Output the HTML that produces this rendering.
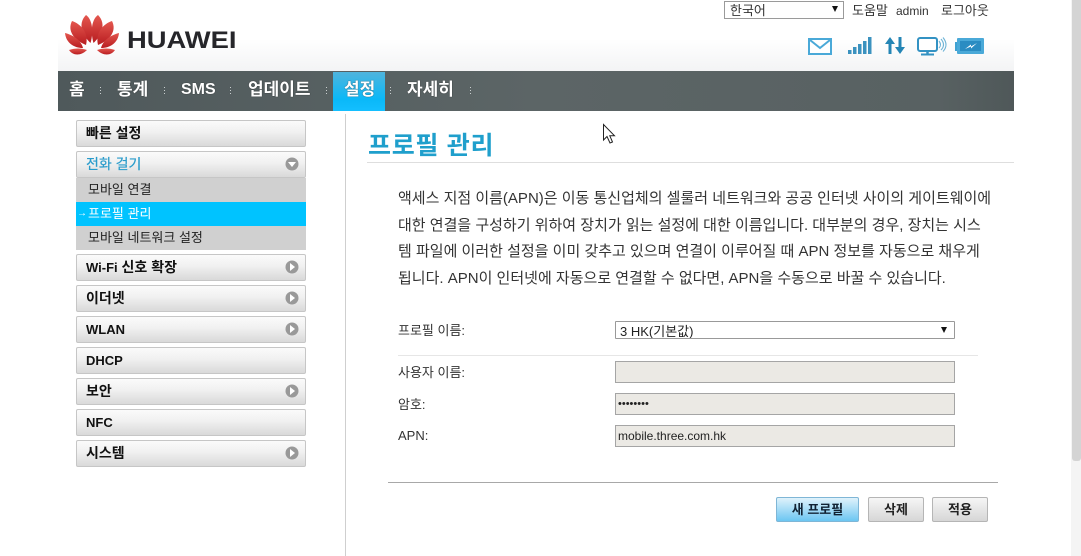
<!DOCTYPE html>
<html lang="ko"><head><meta charset="utf-8"><title>프로필 관리</title>
<style>
html,body{margin:0;padding:0;width:1081px;height:556px;overflow:hidden;background:#fff}
body{font-family:"Liberation Sans","Noto Sans CJK KR",sans-serif;font-size:12px;color:#222;position:relative}
.a{position:absolute;white-space:nowrap}
#hd{left:58px;top:0;width:956px;height:71px;background:linear-gradient(#fff 55%,#f3f4f5)}
#nav{left:58px;top:71px;width:956px;height:40px;background:linear-gradient(90deg,#4f595b,#5c6566 50%,#586162 92%,#4f5859)}
.n{top:80px;font-size:17px;line-height:20px;color:#fff;font-weight:bold;text-shadow:0 0 1px #222}
.d{top:87px;width:1px;height:9px;background:repeating-linear-gradient(#c9cfcf 0 1px,transparent 1px 3px)}
#act{left:333px;top:72px;width:52px;height:39px;background:linear-gradient(#4fb4dc,#0ab8f8 70%,#14bfff)}
.m{left:76px;width:228px;height:25px;border:1px solid #c6c6c6;border-radius:2px;background:linear-gradient(#fbfbfb,#f0f0f0 45%,#d9d9d9);font-size:14px;font-weight:bold;line-height:25px;text-indent:9px;color:#111}
.m i{font-style:normal;font-size:13px}
.s{left:76px;width:230px;height:24px;background:#d0d0d0;font-size:13px;line-height:24px;text-indent:12px;color:#222}
.ic{left:285px;width:14px;height:14px}
.lb{left:398px;font-size:13px;line-height:16px;color:#333}
.in{left:615px;width:338px;height:20px;border:1px solid #a5a5a5;background:#ebe9e4;font-size:12px;line-height:20px;color:#222}
.b{top:497px;height:23px;border:1px solid #b5b5b5;border-radius:2px;background:linear-gradient(#f6f6f6,#d6d6d6);text-align:center;font-size:13px;font-weight:bold;line-height:23px;color:#222}
p{margin:0}
</style></head><body>
<div class="a" id="hd"></div>

<svg class="a" style="left:62px;top:12px" width="62" height="46" viewBox="0 0 62 46">
<defs><linearGradient id="g" x1="0" y1="0" x2="0" y2="1"><stop offset="0" stop-color="#e4574f"/><stop offset="1" stop-color="#b81c20"/></linearGradient></defs>
<g fill="url(#g)">
<path d="M28.500 31C21 24 15 12 24 3C30 7 32 19 28.500 31Z"/>
<path d="M31.500 31C39 24 45 12 36 3C30 7 28 19 31.500 31Z"/>
<path d="M24 33C12 28 5 19 10 9C19 12 27 21 24 33Z"/>
<path d="M36 33C48 28 55 19 50 9C41 12 33 21 36 33Z"/>
<path d="M21 36C12 36 4 31 3 21C11 23 19 28 21 36Z"/>
<path d="M39 36C48 36 56 31 57 21C49 23 41 28 39 36Z"/>
<path d="M25 38C19 44 11 44 7 38C13 36 19 36 25 38Z"/>
<path d="M35 38C41 44 49 44 53 38C47 36 41 36 35 38Z"/>
</g></svg>
<div class="a" style="left:127px;top:26px;font-size:24px;line-height:30px;font-weight:bold;color:#26262a;transform:scaleX(1.14);transform-origin:0 0">HUAWEI</div>

<div class="a" style="left:724px;top:1px;width:118px;height:16px;border:1px solid #9a9a9a;font-size:13px;line-height:17px;text-indent:5px;color:#333">한국어</div>
<div class="a" style="left:832px;top:6px;width:0;height:0;border:3.500px solid transparent;border-top:6px solid #111;border-bottom:0"></div>
<div class="a" style="left:852px;top:3px;font-size:13px;line-height:16px;color:#333">도움말</div>
<div class="a" style="left:896px;top:3px;font-size:12px;line-height:16px;color:#333">admin</div>
<div class="a" style="left:941px;top:3px;font-size:13px;line-height:16px;color:#333">로그아웃</div>

<svg class="a" style="left:805px;top:35px" width="185" height="22" viewBox="0 0 185 22">
<rect x="4" y="4" width="22" height="15" fill="#fff" stroke="#4aa9d8" stroke-width="2"/>
<path d="M5 5L15 13L25 5" fill="none" stroke="#4aa9d8" stroke-width="2"/>
<g fill="#3b92bf"><rect x="43" y="15" width="3.500" height="4"/><rect x="48" y="12" width="3.500" height="7"/><rect x="53" y="9" width="3.500" height="10"/><rect x="58" y="6" width="3.500" height="13"/><rect x="63" y="2" width="3.500" height="17"/></g>
<path d="M85 2L90 9H86.500V19H83.500V9H80Z" fill="#2485b5"/>
<path d="M95 19L100 12H96.500V2H93.500V12H90Z" fill="#2485b5"/>
<rect x="113" y="3" width="19" height="13" rx="2" fill="#fff" stroke="#3392c3" stroke-width="2"/>
<path d="M122.500 16V19" stroke="#3392c3" stroke-width="2.500"/><path d="M116 19.500H129" stroke="#3392c3" stroke-width="2"/>
<path d="M134 6Q137 10 134 13M136 4Q141 10 136 15M138 2.500Q144 10 138 16.500" fill="none" stroke="#6fb4d6" stroke-width="1.100"/>
<rect x="150" y="7" width="3" height="9" fill="#3ea1d2"/>
<rect x="152" y="3" width="27" height="16" rx="1" fill="#4aa9d8"/>
<rect x="155" y="6" width="21" height="10" fill="#2a8cc2"/>
<path d="M160 14L166 9.500V11.500L172 8L166 13.500V11.500Z" fill="#fff"/>
</svg>

<div class="a" id="nav"></div>
<div class="a" id="act"></div>
<div class="a n" style="left:69px">홈</div><div class="a d" style="left:100px"></div>
<div class="a n" style="left:117px">통계</div><div class="a d" style="left:164px"></div>
<div class="a n" style="left:181px;font-size:16px">SMS</div><div class="a d" style="left:230px"></div>
<div class="a n" style="left:248px">업데이트</div><div class="a d" style="left:326px"></div>
<div class="a n" style="left:344px">설정</div><div class="a d" style="left:390px"></div>
<div class="a n" style="left:407px">자세히</div><div class="a d" style="left:470px"></div>

<div class="a m" style="top:120px">빠른 설정</div>
<div class="a m" style="top:151px;color:#2a9ccb;font-weight:normal;-webkit-text-stroke:.2px #2a9ccb">전화 걸기</div>
<svg class="a ic" style="top:157px" viewBox="0 0 14 14"><circle cx="7" cy="7" r="6.500" fill="#999"/><path d="M3 5H11L7 10Z" fill="#fff"/></svg>
<div class="a s" style="top:178px">모바일 연결</div>
<div class="a s" style="top:202px;background:#00c3ff;color:#fff;text-indent:0"><span style="position:absolute;left:1px;top:0;font-size:10px;text-indent:0">→</span><span style="position:absolute;left:12px;top:0;text-indent:0">프로필 관리</span></div>
<div class="a s" style="top:226px">모바일 네트워크 설정</div>
<div class="a m" style="top:254px"><i>Wi-Fi</i> 신호 확장</div>
<div class="a m" style="top:285px">이더넷</div>
<div class="a m" style="top:316px"><i>WLAN</i></div>
<div class="a m" style="top:347px"><i>DHCP</i></div>
<div class="a m" style="top:378px">보안</div>
<div class="a m" style="top:409px"><i>NFC</i></div>
<div class="a m" style="top:440px">시스템</div>
<svg class="a ic" style="top:260px" viewBox="0 0 14 14"><circle cx="7" cy="7" r="6.500" fill="#999"/><path d="M5 3V11L10 7Z" fill="#fff"/></svg>
<svg class="a ic" style="top:291px" viewBox="0 0 14 14"><circle cx="7" cy="7" r="6.500" fill="#999"/><path d="M5 3V11L10 7Z" fill="#fff"/></svg>
<svg class="a ic" style="top:322px" viewBox="0 0 14 14"><circle cx="7" cy="7" r="6.500" fill="#999"/><path d="M5 3V11L10 7Z" fill="#fff"/></svg>
<svg class="a ic" style="top:384px" viewBox="0 0 14 14"><circle cx="7" cy="7" r="6.500" fill="#999"/><path d="M5 3V11L10 7Z" fill="#fff"/></svg>
<svg class="a ic" style="top:446px" viewBox="0 0 14 14"><circle cx="7" cy="7" r="6.500" fill="#999"/><path d="M5 3V11L10 7Z" fill="#fff"/></svg>

<div class="a" style="left:345px;top:114px;width:1px;height:442px;background:#cfcfcf"></div>
<div class="a" style="left:368px;top:129px;font-size:25px;line-height:34px;font-weight:bold;color:#1f9fcc;letter-spacing:.7px">프로필 관리</div>
<div class="a" style="left:367px;top:162px;width:647px;height:1px;background:#dedede"></div>

<div class="a" style="left:398px;top:186px;font-size:15px;line-height:26.700px;color:#333">
<p>액세스 지점 이름(APN)은 이동 통신업체의 셀룰러 네트워크와 공공 인터넷 사이의 게이트웨이에</p>
<p>대한 연결을 구성하기 위하여 장치가 읽는 설정에 대한 이름입니다. 대부분의 경우, 장치는 시스</p>
<p>템 파일에 이러한 설정을 이미 갖추고 있으며 연결이 이루어질 때 APN 정보를 자동으로 채우게</p>
<p>됩니다. APN이 인터넷에 자동으로 연결할 수 없다면, APN을 수동으로 바꿀 수 있습니다.</p>
</div>

<div class="a lb" style="top:323px">프로필 이름:</div>
<div class="a in" style="top:321px;height:16px;line-height:20px;background:#fff;border-color:#999;border-radius:1px;text-indent:4px;overflow:hidden;color:#222;font-size:13px">3 HK(기본값)</div>
<div class="a" style="left:941px;top:327px;width:0;height:0;border:3.500px solid transparent;border-top:6px solid #111;border-bottom:0"></div>
<div class="a" style="left:398px;top:355px;width:580px;height:1px;background:#e6e6e6"></div>
<div class="a lb" style="top:365px">사용자 이름:</div>
<div class="a in" style="top:361px"></div>
<div class="a lb" style="top:397px">암호:</div>
<div class="a in" style="top:393px;text-indent:2px;letter-spacing:0;font-size:11px">••••••••</div>
<div class="a lb" style="top:428px">APN:</div>
<div class="a in" style="top:425px;text-indent:2px">mobile.three.com.hk</div>

<div class="a" style="left:388px;top:482px;width:610px;height:1px;background:#a8a8a8"></div>
<div class="a b" style="left:776px;width:81px;border-color:#7fb6d6;background:linear-gradient(#e0f2fb,#6cc6f2);color:#123">새 프로필</div>
<div class="a b" style="left:868px;width:54px">삭제</div>
<div class="a b" style="left:932px;width:54px">적용</div>

<svg class="a" style="left:602px;top:123px" width="14" height="22" viewBox="0 0 14 22"><path d="M1.500 1.500V17L5 13.500L8 20L10.500 19L7.800 12.800H12.500Z" fill="#fff" stroke="#222" stroke-width="1"/></svg>

<div class="a" style="left:1071px;top:0;width:10px;height:556px;background:#f4f4f4"></div>
<div class="a" style="left:1072px;top:0;width:9px;height:461px;background:#d4d4d4;border-radius:0 0 3px 3px"></div>
</body></html>
